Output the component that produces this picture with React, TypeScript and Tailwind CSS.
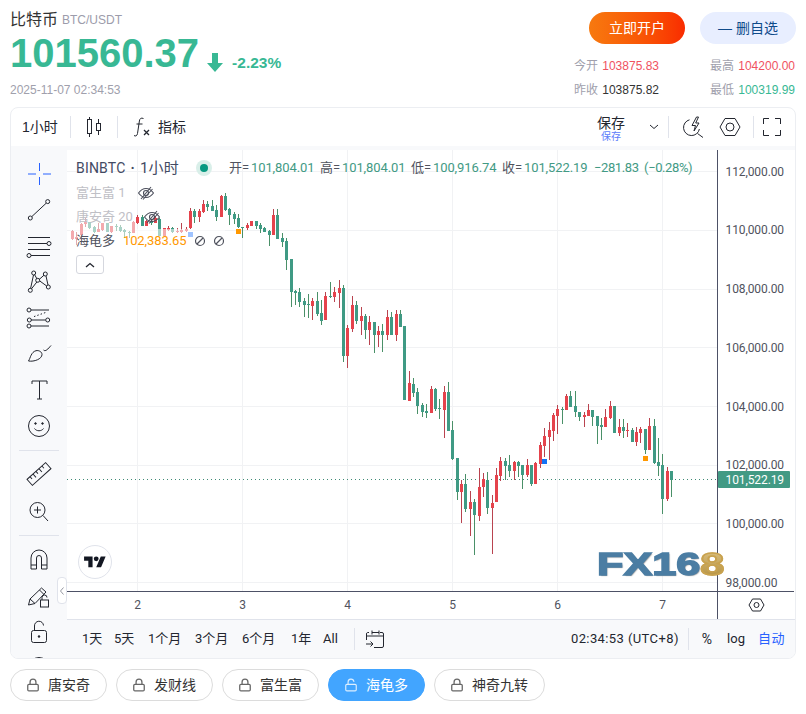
import React from 'react';
import { Lock, LockOpen } from 'lucide-react';

// [x, wickTop, bodyTop, bodyBottom, wickBottom, isRed], read off the chart in 3x units from each origin
type Candle = [number, number, number, number, number, number];

const SEG_A: Candle[] = [
  [8, 120, 122, 148, 150, 1], [20, 125, 140, 147, 165, 1], [34, 100, 103, 135, 150, 1], [46, 85, 97, 103, 110, 1],
  [58, 95, 97, 113, 118, 0], [72, 108, 112, 125, 130, 0], [85, 100, 118, 125, 125, 1], [97, 98, 100, 120, 122, 1],
  [112, 98, 100, 125, 125, 0], [125, 108, 108, 125, 128, 1], [140, 103, 107, 109, 122, 0], [152, 105, 110, 122, 125, 0],
  [164, 118, 120, 125, 145, 0], [178, 122, 125, 127, 145, 0], [190, 93, 95, 130, 130, 1], [203, 75, 82, 100, 102, 1],
  [217, 75, 82, 108, 108, 0], [230, 90, 92, 107, 108, 1], [243, 88, 92, 100, 104, 0], [256, 78, 85, 98, 100, 1],
  [268, 85, 87, 137, 137, 0], [283, 114, 114, 137, 137, 1], [295, 108, 114, 120, 122, 1], [307, 110, 114, 125, 128, 0],
  [322, 115, 122, 125, 130, 1], [334, 98, 120, 125, 128, 1], [349, 112, 116, 123, 125, 1], [361, 55, 64, 115, 118, 1],
  [373, 58, 62, 80, 98, 0], [388, 58, 62, 82, 97, 1], [400, 30, 42, 66, 68, 1], [412, 32, 42, 50, 62, 0],
  [427, 30, 48, 62, 64, 0], [439, 45, 60, 80, 92, 0], [454, 15, 18, 80, 80, 1], [466, 10, 18, 60, 62, 0],
  [478, 55, 57, 74, 105, 0], [493, 65, 72, 87, 102, 0], [505, 72, 85, 112, 114, 0], [517, 110, 111, 114, 143, 0],
  [532, 98, 105, 113, 120, 1], [544, 93, 93, 107, 107, 1], [559, 93, 93, 108, 118, 0], [571, 100, 105, 117, 130, 0],
  [583, 112, 113, 125, 126, 0], [598, 120, 122, 135, 167, 0], [610, 57, 75, 135, 135, 1], [622, 57, 75, 147, 147, 0],
  [637, 130, 144, 155, 170, 0], [649, 145, 153, 210, 240, 0], [664, 207, 207, 305, 350, 0], [676, 300, 304, 308, 345, 0],
  [688, 295, 306, 336, 350, 0], [703, 325, 333, 345, 382, 0], [715, 312, 343, 345, 385, 0],
];

const SEG_B: Candle[] = [
  [37, 85, 93, 108, 150, 1], [52, 67, 93, 132, 138, 0], [64, 90, 129, 153, 165, 0], [76, 66, 78, 150, 150, 1],
  [91, 37, 78, 81, 84, 0], [103, 51, 66, 81, 96, 1], [118, 30, 54, 69, 114, 1], [130, 45, 54, 258, 276, 0],
  [142, 165, 174, 258, 294, 1], [157, 78, 105, 177, 186, 1], [169, 93, 105, 153, 162, 0], [184, 111, 138, 153, 195, 1],
  [196, 132, 138, 180, 207, 0], [208, 138, 156, 180, 225, 1], [223, 156, 156, 195, 249, 0], [235, 168, 183, 195, 231, 1],
  [247, 162, 183, 195, 246, 0], [262, 120, 141, 195, 210, 1], [274, 126, 141, 195, 195, 0], [289, 120, 132, 195, 213, 1],
  [301, 120, 132, 171, 171, 0], [313, 168, 168, 390, 390, 0], [328, 303, 339, 393, 393, 1], [340, 324, 342, 369, 381, 0],
  [352, 354, 366, 408, 432, 0], [367, 399, 405, 426, 441, 0], [379, 402, 423, 429, 444, 0], [394, 348, 357, 429, 429, 1],
  [406, 354, 357, 417, 423, 0], [418, 387, 414, 417, 447, 0],
];

const SEG_C: Candle[] = [
  [13, 18, 36, 90, 174, 1], [25, 6, 36, 153, 153, 0], [37, 123, 150, 237, 240, 0], [52, 234, 234, 336, 360, 0],
  [64, 300, 312, 336, 429, 1], [76, 282, 312, 387, 396, 0], [91, 333, 366, 387, 468, 1], [103, 357, 366, 405, 525, 0],
  [118, 264, 321, 408, 423, 1], [130, 280, 298, 321, 350, 1], [142, 276, 300, 384, 402, 0], [157, 345, 369, 384, 522, 1],
  [169, 264, 285, 366, 366, 1], [181, 231, 243, 288, 303, 1], [196, 234, 243, 258, 300, 0], [208, 225, 255, 273, 291, 0],
  [223, 243, 246, 273, 300, 1], [235, 243, 246, 258, 291, 0], [247, 255, 255, 285, 327, 0], [262, 237, 255, 285, 291, 1],
  [274, 255, 255, 312, 318, 0], [286, 246, 249, 312, 312, 1], [301, 186, 195, 252, 264, 1], [313, 144, 168, 198, 231, 1],
  [328, 126, 150, 171, 240, 1], [340, 99, 105, 153, 183, 1], [352, 75, 87, 108, 162, 1], [367, 81, 87, 90, 132, 0],
  [379, 42, 48, 90, 90, 1], [391, 33, 48, 81, 81, 0], [406, 33, 78, 96, 111, 0], [418, 96, 96, 111, 123, 0],
  [433, 96, 105, 111, 141, 1], [445, 72, 90, 108, 108, 1], [457, 90, 90, 111, 138, 0], [472, 108, 108, 138, 192, 0],
  [484, 114, 135, 141, 180, 0], [496, 87, 111, 141, 141, 1], [511, 63, 78, 114, 117, 1], [523, 78, 78, 159, 159, 0],
  [538, 117, 141, 159, 168, 1], [550, 117, 141, 153, 174, 0], [562, 129, 150, 153, 171, 1], [577, 144, 150, 186, 186, 0],
  [589, 141, 156, 186, 198, 1], [601, 141, 147, 159, 189, 1], [616, 147, 147, 210, 222, 0], [628, 114, 138, 210, 210, 1],
  [643, 117, 138, 249, 252, 0], [655, 174, 246, 258, 288, 0], [667, 222, 255, 357, 402, 0], [682, 261, 273, 357, 363, 1],
  [694, 273, 273, 300, 351, 0],
];

const CHART_LEFT = 67;
const CHART_TOP = 150;

function toPage(list: Candle[], ox: number, oy: number) {
  return list.map(([x, wt, bt, bb, wb, red]) => ({
    x: Math.round(ox + x / 3 - CHART_LEFT - 1.5),
    wt: oy + wt / 3 - CHART_TOP,
    bt: oy + bt / 3 - CHART_TOP,
    bb: oy + bb / 3 - CHART_TOP,
    wb: oy + wb / 3 - CHART_TOP,
    red,
  }));
}

const CANDLES = [...toPage(SEG_A, 70, 190), ...toPage(SEG_B, 300, 270), ...toPage(SEG_C, 440, 380)];

const PRICES = ['112,000.00', '110,000.00', '108,000.00', '106,000.00', '104,000.00', '102,000.00', '100,000.00', '98,000.00'];
const GRID_Y = [21.5, 80, 139, 197.5, 256.5, 315, 373.5, 432.5];
const DAYS: [string, number][] = [['2', 70.5], ['3', 175.5], ['4', 280.5], ['5', 385.5], ['6', 490.5], ['7', 595.5]];

const CHART_FONT = { fontFamily: 'Roboto, "Noto Sans CJK SC", sans-serif' };

const Chart = () => (
  <svg width="727" height="469" viewBox="0 0 727 469" className="block shrink-0" style={CHART_FONT}>
    {GRID_Y.map((y) => (
      <rect key={y} x="0" y={Math.floor(y)} width="650" height="1" fill="#f1f2f4" />
    ))}
    {DAYS.map(([d, x]) => (
      <rect key={d} x={Math.floor(x)} y="0" width="1" height="441" fill="#f1f2f4" />
    ))}
    <line x1="0" y1="329.5" x2="650" y2="329.5" stroke="#3f8a75" strokeDasharray="1 3" />
    {CANDLES.map((c, i) => (
      <g key={i} shapeRendering="crispEdges">
        <rect x={c.x + 1} y={c.wt} width="1" height={c.wb - c.wt} fill={c.red ? '#b9434f' : '#4a9068'} />
        <rect x={c.x} y={c.bt} width="3" height={Math.max(c.bb - c.bt, 1)} fill={c.red ? '#e5434c' : '#3f9a84'} />
      </g>
    ))}
    <rect x="121" y="82" width="5" height="5" fill="#2979ff" />
    <rect x="169" y="79" width="5" height="5" fill="#ff9800" />
    <rect x="475" y="309" width="5" height="5" fill="#1272f5" />
    <rect x="576" y="306" width="5" height="5" fill="#ff9800" />
    <rect x="650" y="0" width="1" height="469" fill="#4d5166" />
    <rect x="0" y="441" width="727" height="1" fill="#4d5166" />
    {PRICES.map((p, i) => (
      <text key={p} x="658.5" y={GRID_Y[i] + 4} fontSize="12" fill="#50535e" letterSpacing="-0.1">
        {p}
      </text>
    ))}
    <rect x="651" y="321" width="72" height="17" rx="1" fill="#429a84" />
    <text x="658.5" y="333.5" fontSize="12" fill="#fff" letterSpacing="-0.1">
      101,522.19
    </text>
    {DAYS.map(([d, x]) => (
      <text key={d} x={x} y="459" fontSize="12" fill="#50535e" textAnchor="middle">
        {d}
      </text>
    ))}
    <g fill="none" stroke="#23262f" transform="translate(689.5 455)">
      <path d="M-7.5 0 L-4 -6 H4 L7.5 0 L4 6 H-4 Z" />
      <circle cx="0" cy="0" r="2.5" />
    </g>
  </svg>
);

const ToolIcon = ({ children }: { children: React.ReactNode }) => (
  <div className="h-9 flex items-center justify-center shrink-0">
    <svg width="28" height="28" viewBox="0 0 28 28" fill="none" stroke="#23262f" strokeWidth="1">
      {children}
    </svg>
  </div>
);

const ToolDivider = ({ className }: { className: string }) => <div className={`h-px bg-[#e0e3eb] mx-[8px] shrink-0 ${className}`} />;

const LeftTools = () => (
  <div className="w-[56px] shrink-0 bg-[#f8f9fb] overflow-hidden pt-[6px] flex flex-col">
    <ToolIcon>
      <path d="M3 14h8M18 14h8M14.5 3v8M14.5 17v8" stroke="#2962ff" />
    </ToolIcon>
    <ToolIcon>
      <path d="M6.800 20.600 21.200 7.200" />
      <circle cx="5.300" cy="22" r="2" />
      <circle cx="22.700" cy="5.600" r="2" />
    </ToolIcon>
    <ToolIcon>
      <path d="M3 5.500h22M3 11.500h19M3 17.500h22M6 23.500h19" />
      <circle cx="24" cy="11.500" r="2" />
      <circle cx="4" cy="23.500" r="2" />
    </ToolIcon>
    <ToolIcon>
      <path d="M5.600 20.400 8.500 7M6.500 20.800 12 13.800M9.500 6.500l2.600 4.600M14 11.600l5-4.400M14.500 12.800l7.200 5.200M21 8l2 9" />
      <circle cx="5.300" cy="22.300" r="2" />
      <circle cx="8.700" cy="5" r="2" />
      <circle cx="12.700" cy="12.300" r="2" />
      <circle cx="20.300" cy="6" r="2" />
      <circle cx="23.300" cy="19" r="2" />
    </ToolIcon>
    <ToolIcon>
      <path d="M6 6h18M6 16h14.500M6 22h18" />
      <path d="M9 12.600 22 8" strokeDasharray="1.500 2" />
      <circle cx="4" cy="6" r="2" />
      <circle cx="4.300" cy="16" r="2" />
      <circle cx="22.700" cy="16" r="2" />
      <circle cx="4" cy="22" r="2" />
    </ToolIcon>
    <ToolIcon>
      <path d="M3.500 21C5.500 18 6 12 11 10.700 14 10 17 12 17 14.500 17 19 9 22 3.500 21Z" />
      <path d="M18.500 10C20.500 12 23 9 26 5.500" />
    </ToolIcon>
    <ToolIcon>
      <path d="M7 8V5h15v3M14.500 5v18M12 23h5" />
    </ToolIcon>
    <ToolIcon>
      <circle cx="14" cy="14" r="10.500" />
      <circle cx="10.500" cy="11.500" r="0.800" fill="#23262f" />
      <circle cx="17.500" cy="11.500" r="0.800" fill="#23262f" />
      <path d="M9.500 16.500c2 3 7 3 9 0" />
    </ToolIcon>
    <ToolDivider className="my-[5.5px]" />
    <ToolIcon>
      <g transform="rotate(-42 14 14)">
        <rect x="1.500" y="10" width="25" height="8" />
        <path d="M5.500 10v3M9.500 10v4.500M13.500 10v3M17.500 10v4.500M21.500 10v3" />
      </g>
    </ToolIcon>
    <ToolIcon>
      <circle cx="12.500" cy="14" r="7.500" />
      <path d="M18 19.500 23 25M12.500 10.500v7M9 14h7" />
    </ToolIcon>
    <ToolDivider className="my-[6.5px]" />
    <ToolIcon>
      <path d="M6 23V12a8 8 0 0 1 16 0v11h-5.500V12a2.500 2.500 0 0 0-5 0v11ZM6 19h5.500M16.500 19H22" />
    </ToolIcon>
    <ToolIcon>
      <path d="M3.500 23 5 17 16.500 6l4.500 4-11 11.500ZM14.500 8l4.500 4.500M5 17l5 4.500" />
      <rect x="15.500" y="18" width="8" height="7" fill="#f8f9fb" />
      <path d="M17 18v-2.500a2.500 2.500 0 0 1 5 0" />
    </ToolIcon>
    <ToolIcon>
      <rect x="6.500" y="12.500" width="15" height="12" rx="2" />
      <path d="M9.500 12.500V8a4.500 4.500 0 0 1 9-.5" />
      <circle cx="14" cy="18.500" r="1.200" fill="#23262f" stroke="none" />
    </ToolIcon>
    <ToolIcon>
      <circle cx="14" cy="14" r="10.500" />
    </ToolIcon>
  </div>
);

const EyeOff = () => (
  <svg width="18" height="16" viewBox="0 0 18 16" fill="none" stroke="#4c4f5c" strokeWidth="1.100">
    <path d="M1.500 8C4 4.500 6.500 3.500 9 3.500s5 1 7.500 4.500C14 11.500 11.500 12.500 9 12.500S4 11.500 1.500 8Z" />
    <circle cx="9" cy="8" r="2.500" />
    <path d="M4 14 14 2M6 14.500 15.500 4" />
  </svg>
);

const NoSign = () => (
  <svg width="12" height="12" viewBox="0 0 12 12" fill="none" stroke="#50535e" strokeWidth="1.200">
    <circle cx="6" cy="6" r="4.500" />
    <path d="M3 9 9 3" />
  </svg>
);

const Ohlc = ({ label, value }: { label: string; value: string }) => (
  <span className="flex">
    <span className="w-[22px]">{label}=</span>
    <span className="text-[#429a84] w-[62.500px]">{value}</span>
  </span>
);

const Legend = () => (
  <div className="absolute left-[3px] top-[6px] flex flex-col items-start text-[13px] text-[#50535e]" style={CHART_FONT}>
    <div className="h-6 pl-[6px] flex items-center">
      <span className="flex items-center w-[120px] text-[14px] text-[#434a63] tracking-[0.2px]">
        BINBTC<span className="mx-[5px] font-bold">·</span>
        <span className="text-[15px]">1小时</span>
      </span>
      <span className="w-4 h-4 rounded-full bg-[#d9efe9] flex items-center justify-center mr-[17px]">
        <span className="w-2 h-2 rounded-full bg-[#089981]" />
      </span>
      <span className="flex gap-[6.500px] whitespace-nowrap tracking-[-0.1px]">
        <Ohlc label="开" value="101,804.01" />
        <Ohlc label="高" value="101,804.01" />
        <Ohlc label="低" value="100,916.74" />
        <Ohlc label="收" value="101,522.19" />
        <span className="text-[#429a84] ml-[1px] tracking-[-0.4px]">−281.83</span>
        <span className="text-[#429a84] -ml-[1px] tracking-[-0.4px]">(−0.28%)</span>
      </span>
    </div>
    <div className="h-6 mt-[1px] pl-[6px] flex items-center text-[#bfc0c6] gap-[11px]">
      <span>富生富 1</span>
      <EyeOff />
    </div>
    <div className="h-6 flex items-center">
      <div className="h-6 pl-[6px] w-[66px] bg-white/55 flex items-center text-[#bfc0c6] whitespace-nowrap">唐安奇 20</div>
      <div className="ml-[-2px] pl-[9px]">
        <EyeOff />
      </div>
    </div>
    <div className="h-6 w-[155px] pl-[6px] bg-white/55 flex items-center whitespace-nowrap">
      <span className="w-[49px]">海龟多</span>
      <span className="text-[#ff9800] w-[70px] tracking-[-0.1px]">102,383.65</span>
      <span className="ml-[4px] flex gap-[7px]">
        <NoSign />
        <NoSign />
      </span>
    </div>
    <div className="ml-[6px] mt-[2px] w-[28px] h-[19px] bg-white rounded-[3px] border border-[#d5d7de] flex items-center justify-center">
      <svg width="10" height="6" viewBox="0 0 10 6" fill="none" stroke="#23262f" strokeWidth="1.300">
        <path d="M1 5 5 1.500 9 5" />
      </svg>
    </div>
  </div>
);

const TopBar = () => (
  <div className="h-[38px] flex items-center text-[14px] text-[#23262f] shrink-0">
    <span className="w-[59px] pl-[11px]">1小时</span>
    <div className="w-px h-[22px] bg-[#e0e3eb]" />
    <div className="w-[46px] flex justify-center">
      <svg width="16" height="20" viewBox="0 0 16 20" fill="none" stroke="#23262f" strokeWidth="1">
        <rect x="1.500" y="2.500" width="4" height="14" />
        <path d="M3.500 0v2.500M3.500 16.500V20" />
        <rect x="10.500" y="6.500" width="4" height="7" />
        <path d="M12.500 2v4.500M12.500 13.500V18" />
      </svg>
    </div>
    <div className="w-px h-[22px] bg-[#e0e3eb]" />
    <svg width="18" height="20" viewBox="0 0 18 20" fill="none" stroke="#23262f" strokeWidth="1" className="ml-[15px]">
      <path d="M10.500 1.500C8 .5 6.800 1.500 6.400 4L4.500 16.500C4.100 19 2.500 19.500 1 18.500M3.500 7h6" />
      <path d="M11 13l5 5M16 13l-5 5" strokeWidth="1.300" />
    </svg>
    <span className="ml-[7px]">指标</span>
    <div className="ml-auto mt-[4px] w-[28px] flex flex-col items-center leading-none">
      <span className="text-[14px]">保存</span>
      <span className="text-[10px] text-[#5c7cfa] mt-[2px]">保存</span>
    </div>
    <svg width="10" height="6" viewBox="0 0 10 6" fill="none" stroke="#23262f" strokeWidth="1" className="ml-[24px] mr-[9px]">
      <path d="M1 1l4 3.500L9 1" />
    </svg>
    <div className="w-px h-[22px] bg-[#e0e3eb]" />
    <svg width="20" height="22" viewBox="0 0 20 22" fill="none" stroke="#23262f" strokeWidth="1" className="ml-[14px]">
      <path d="M6.500 3.800A8 8 0 1 0 16.400 13M14.500 17.500 20 21.500" />
      <path d="M13.500 1 9 9.500h3.500L11 15l5-8h-3.300L15.500 1Z" />
    </svg>
    <svg width="22" height="20" viewBox="0 0 22 20" fill="none" stroke="#23262f" strokeWidth="1" className="ml-[16px]">
      <path d="M1 10 6 1.500h10L21 10l-5 8.500H6Z" />
      <circle cx="11" cy="10" r="4" />
    </svg>
    <div className="w-px h-[22px] bg-[#e0e3eb] ml-[12px]" />
    <svg width="18" height="18" viewBox="0 0 18 18" fill="none" stroke="#23262f" strokeWidth="1" className="ml-[9px]">
      <path d="M6 .5H.5V6M12 .5h5.500V6M6 17.500H.5V12M12 17.500h5.500V12" />
    </svg>
    <div className="w-[14px] shrink-0" />
  </div>
);

const RANGES: [string, string][] = [
  ['1天', 'w-[32px]'],
  ['5天', 'w-[34px]'],
  ['1个月', 'w-[47px]'],
  ['3个月', 'w-[47px]'],
  ['6个月', 'w-[49px]'],
  ['1年', 'w-[32px]'],
  ['All', 'w-[21px]'],
];

const BottomBar = () => (
  <div className="h-[39px] bg-[#f8f9fb] border-t border-[#e0e3eb] flex items-center text-[13px] text-[#23262f] pl-[15px]" style={CHART_FONT}>
    {RANGES.map(([label, w]) => (
      <span key={label} className={w}>
        {label}
      </span>
    ))}
    <div className="w-px h-[22px] bg-[#e0e3eb] ml-[10px]" />
    <svg width="20" height="20" viewBox="0 0 20 20" fill="none" stroke="#23262f" strokeWidth="1" className="ml-[10px]">
      <path d="M4 3.500H2.500A1.500 1.500 0 0 0 1.500 5v6M1.500 7h17M18.500 5v12a1.500 1.500 0 0 1-1.500 1.500H9M7 1.500v4M14 1.500v4M7 3.500h7M15 3.500h2a1.500 1.500 0 0 1 1.500 1.500" />
      <path d="M1 15h7M5.500 12.500 8 15l-2.500 2.500" />
    </svg>
    <span className="ml-auto whitespace-nowrap tracking-[0.4px]">02:34:53 (UTC+8)</span>
    <div className="w-px h-[22px] bg-[#e0e3eb] ml-[9px]" />
    <span className="ml-[13px] text-[14px]">%</span>
    <span className="ml-[15px]">log</span>
    <span className="ml-[13px] mr-[10px] text-[#2962ff] tracking-[0.5px]">自动</span>
  </div>
);

const TABS = ['唐安奇', '发财线', '富生富', '海龟多', '神奇九转'];

const Tabs = () => (
  <div className="flex gap-[9px] px-[10px] mt-[10px]">
    {TABS.map((t) => {
      const on = t === '海龟多';
      return (
        <div
          key={t}
          className={`h-8 pl-[15px] pr-[16px] rounded-full flex items-center gap-[8px] text-[14px] border ${
            on ? 'bg-[#42a5ff] border-[#42a5ff] text-white' : 'bg-white border-[#dcdcdc] text-[#333333]'
          }`}
        >
          {on ? <LockOpen size={14} strokeWidth={2} color="#dceeff" /> : <Lock size={14} strokeWidth={2.200} color="#666666" />}
          {t}
        </div>
      );
    })}
  </div>
);

const Stat = ({ label, value, color }: { label: string; value: string; color: string }) => (
  <div className="flex items-center justify-between w-[85px]">
    <span className="text-[#a0a0ac]">{label}</span>
    <span className={color}>{value}</span>
  </div>
);

export default function App() {
  return (
    <div className="w-[806px] h-[714px] bg-white overflow-hidden font-['Liberation_Sans','Noto_Sans_CJK_SC',sans-serif]">
      {/* Quote header */}
      <div className="h-[107px] px-[10px] flex justify-between">
        <div>
          <div className="pt-[10px] h-[29px] flex items-center gap-[4px]">
            <span className="text-[16px] text-[#333333]">比特币</span>
            <span className="text-[12px] text-[#9c9cab]">BTC/USDT</span>
          </div>
          <div className="flex items-center h-[46px] text-[#38b894] font-bold">
            <span className="text-[40px] leading-none mt-[2px]">101560.37</span>
            <svg width="16" height="19" viewBox="0 0 16 19" className="ml-[8px] mt-[20px]" fill="#38b894">
              <path d="M5 0h6v10h5l-8 9-8-9h5Z" />
            </svg>
            <span className="text-[15.5px] ml-[9px] mt-[22px]">-2.23%</span>
          </div>
          <div className="text-[12px] text-[#a0a0ac] mt-[6px]">2025-11-07 02:34:53</div>
        </div>
        <div className="w-[222px] pt-[12px] flex flex-col items-end">
          <div className="flex gap-[15px] text-[14px]">
            <div className="w-24 h-8 rounded-full bg-gradient-to-r from-[#f7790f] to-[#f92b00] text-white flex items-center justify-center">立即开户</div>
            <div className="w-24 h-8 rounded-full bg-[#e8eeff] text-[#0f4a8a] flex items-center justify-center">— 删自选</div>
          </div>
          <div className="mt-[14px] grid grid-cols-[85px_85px] gap-x-[51px] gap-y-[7px] text-[12px] leading-[17px] w-full">
            <Stat label="今开" value="103875.83" color="text-[#f0525f]" />
            <Stat label="最高" value="104200.00" color="text-[#f0525f]" />
            <Stat label="昨收" value="103875.82" color="text-[#333333]" />
            <Stat label="最低" value="100319.99" color="text-[#38b894]" />
          </div>
        </div>
      </div>

      {/* Chart panel */}
      <div className="relative mx-[10px] h-[552px] rounded-lg border border-[#eceef2] overflow-hidden flex flex-col bg-white">
        <TopBar />
        <div className="h-[4px] bg-[#f8f9fb] shrink-0" />
        <div className="flex flex-1 min-h-0">
          <LeftTools />
          <div className="flex-1 min-w-0 flex flex-col relative">
            <Chart />
            <Legend />
            <BottomBar />
            {/* TradingView badge */}
            <div className="absolute left-[11px] top-[395px] w-[34px] h-[34px] rounded-full bg-white border border-[#e0e3eb] flex items-center justify-center">
              <svg width="22" height="17" viewBox="0 0 36 28" fill="#131722">
                <path d="M14 22H7V11H0V4h14v18zM28 22h-8l7.500-18h8L28 22z" />
                <circle cx="20" cy="8" r="4" />
              </svg>
            </div>
            {/* Watermark */}
            <div className="absolute left-[530px] top-[397px] h-[34px] flex items-center text-[32px] font-bold leading-none origin-left scale-x-[1.35] text-[#4b7da3] [-webkit-text-stroke:1.5px_#4b7da3] [text-shadow:1px_1px_1px_#9a9a9a] font-['Liberation_Sans',sans-serif] whitespace-nowrap">
              FX16
              <span className="bg-gradient-to-b from-[#dcc283] to-[#b18e3c] bg-clip-text text-transparent [-webkit-text-stroke:1.5px_#c9a24e] [text-shadow:none]">8</span>
            </div>
          </div>
          {/* Collapse handle */}
          <div className="absolute left-[46px] top-[469px] w-[10px] h-[27px] rounded-[4px] bg-white border border-[#e0e3eb] flex items-center justify-center">
            <svg width="4" height="8" viewBox="0 0 4 8" fill="none" stroke="#9598a1" strokeWidth="1">
              <path d="M3.500 .5.500 4l3 3.500" />
            </svg>
          </div>
        </div>
      </div>

      <Tabs />
    </div>
  );
}
